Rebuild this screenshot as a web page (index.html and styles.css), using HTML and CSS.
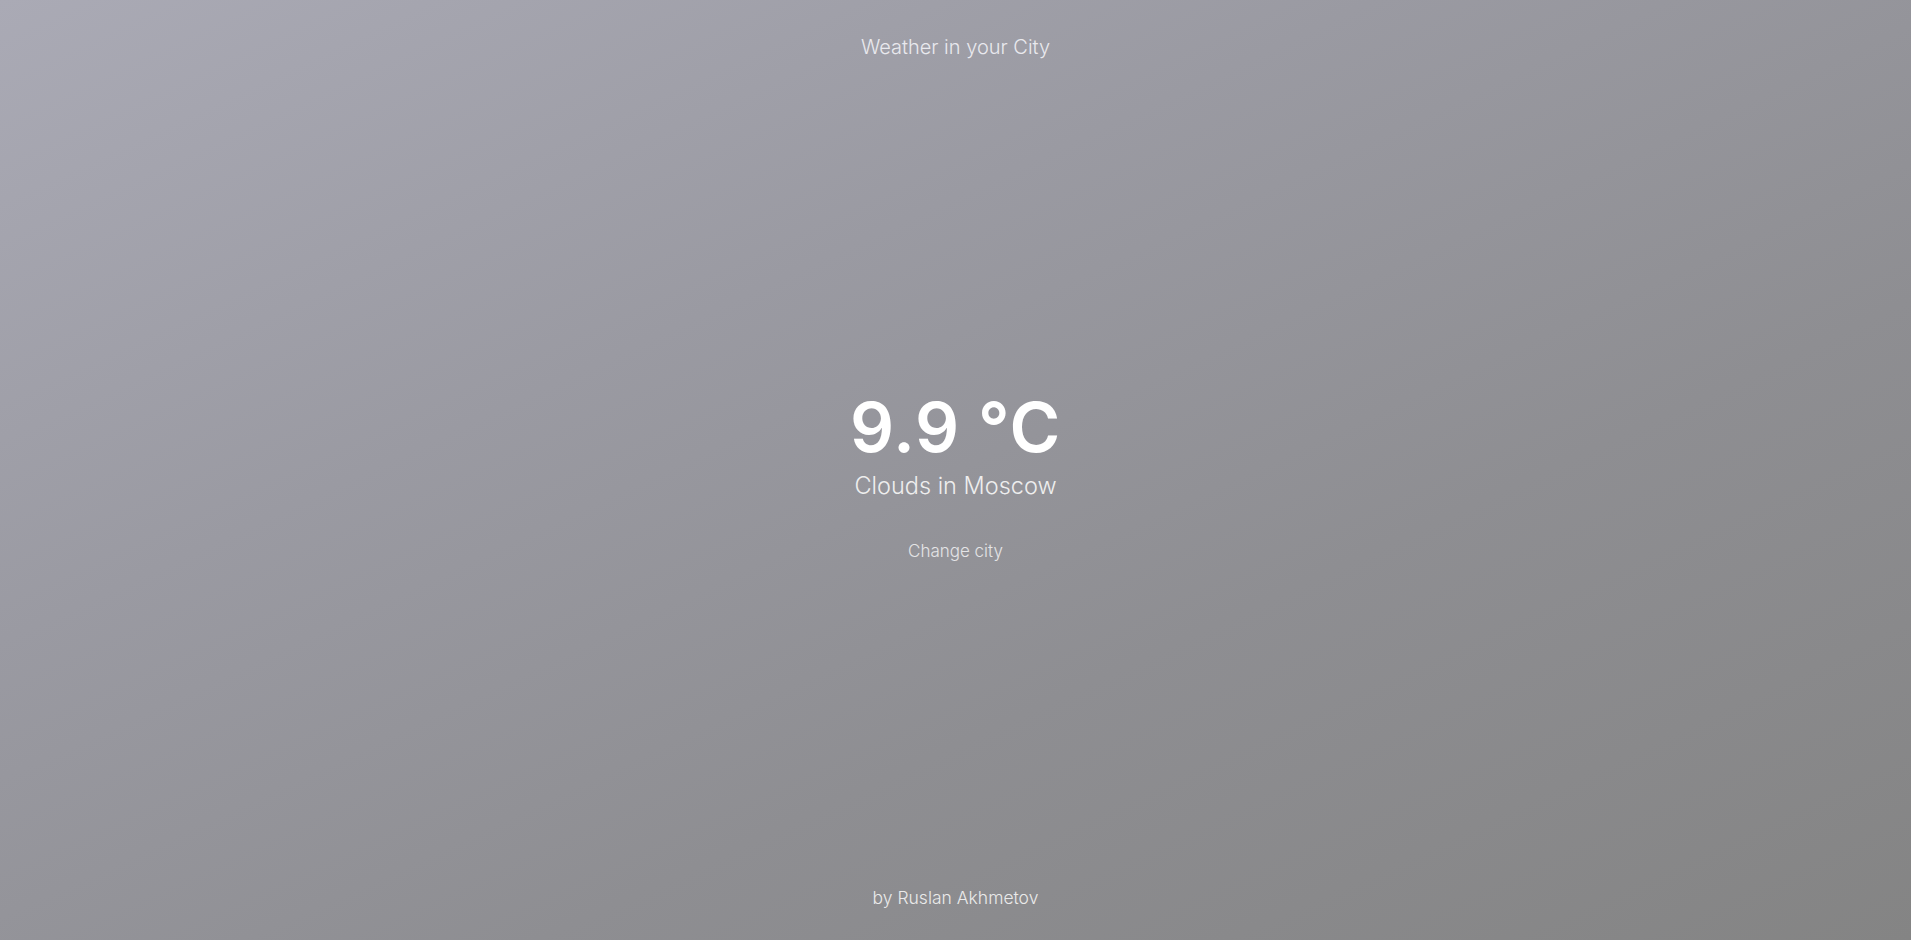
FILE: index.html
```html
<!DOCTYPE html>
<html lang="en">
<head>
<meta charset="utf-8">
<title>Weather</title>
<link rel="stylesheet" href="styles.css">
</head>
<body>
<div class="page">
  <header class="header">Weather in your City</header>
  <main class="main">
    <div class="temp">9.9 °C</div>
    <div class="desc">Clouds in Moscow</div>
    <button class="change">Change city</button>
  </main>
  <footer class="footer">by Ruslan Akhmetov</footer>
</div>
</body>
</html>
```
FILE: styles.css
```css
html, body {
  margin: 0;
  padding: 0;
  height: 100%;
}
body {
  font-family: Inter, "Noto Sans", sans-serif;
  background: linear-gradient(155deg, #aaaab5 0%, #9a9aa2 35%, #8e8e92 65%, #848484 100%);
  color: #fff;
}
.page {
  height: 100vh;
  display: flex;
  flex-direction: column;
  align-items: center;
}
.header {
  padding-top: 35px;
  font-size: 20px;
  font-weight: 300;
  color: #e9e9ee;
}
.main {
  flex: 1;
  display: flex;
  flex-direction: column;
  align-items: center;
  justify-content: center;
  padding-top: 8px;
}
.temp {
  font-size: 69px;
  font-weight: 600;
  line-height: 1;
  letter-spacing: 0.8px;
}
.desc {
  font-size: 23.5px;
  font-weight: 300;
  color: #eeeeee;
  margin-top: 9px;
}
.change {
  margin-top: 40px;
  background: none;
  border: none;
  font-family: inherit;
  font-size: 17px;
  font-weight: 300;
  color: #e4e4e6;
  cursor: pointer;
}
.footer {
  padding-bottom: 32px;
  font-size: 17.5px;
  font-weight: 300;
  color: #eaeaea;
}
```
